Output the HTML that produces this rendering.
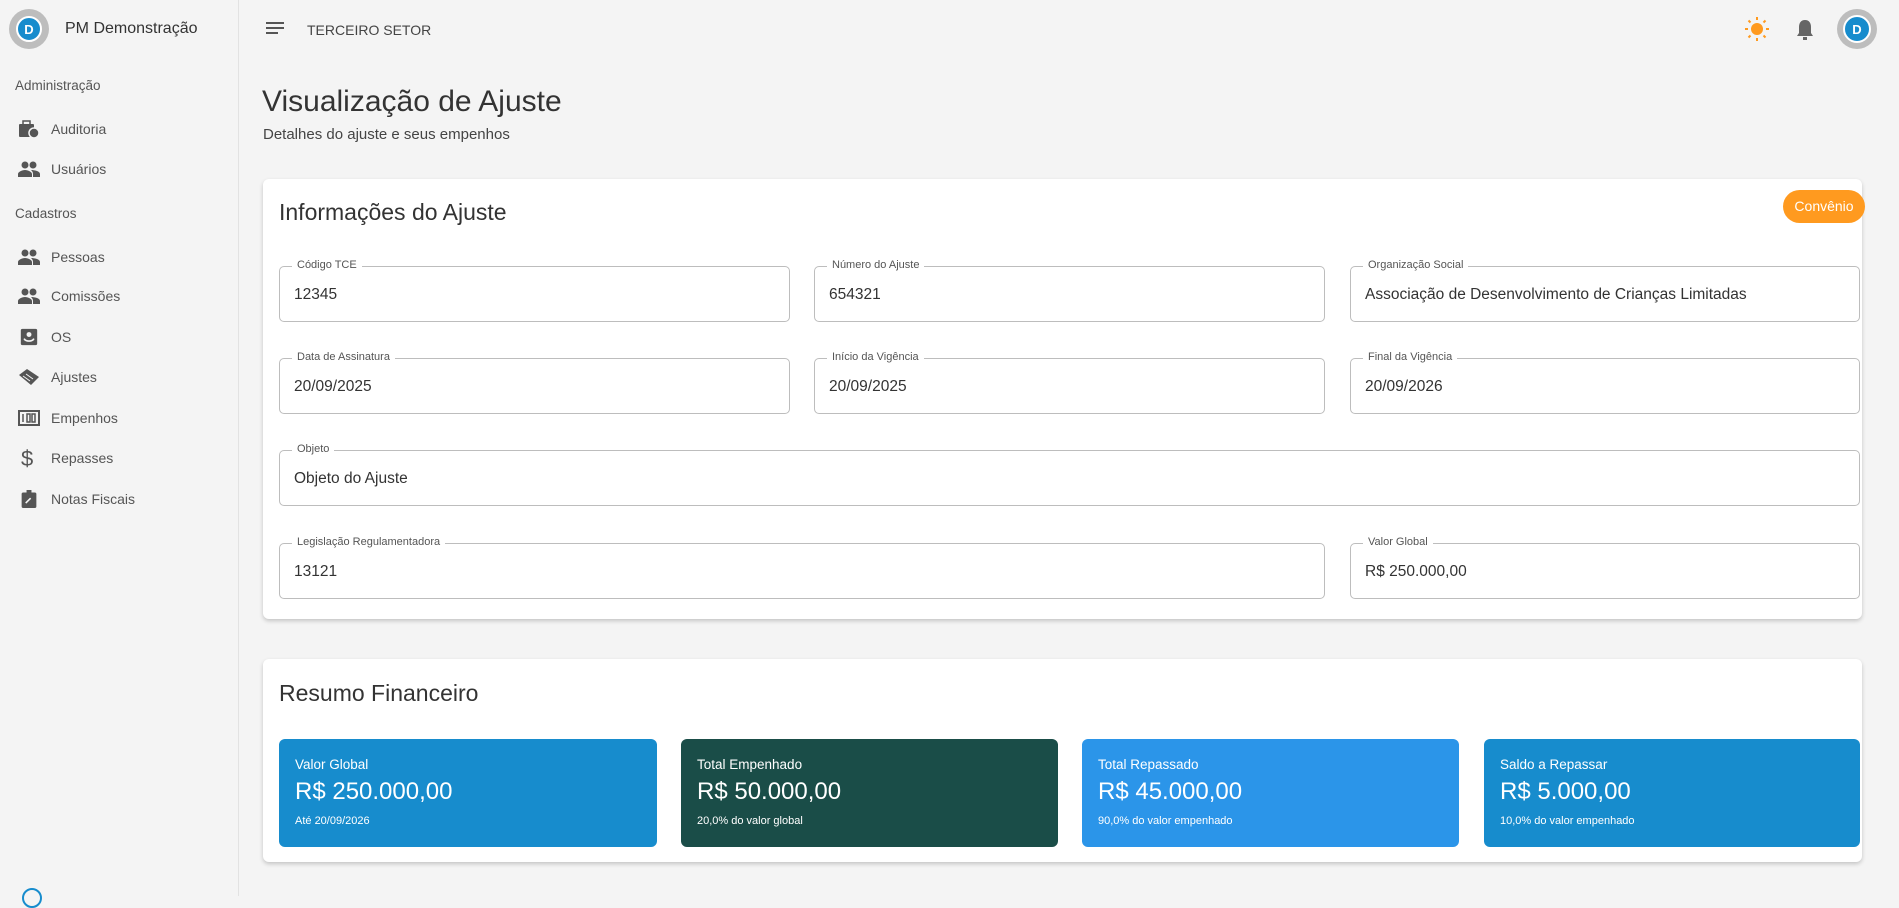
<!DOCTYPE html>
<html><head><meta charset="utf-8"><style>
*{box-sizing:border-box;margin:0;padding:0}
body{width:1899px;height:896px;overflow:hidden;background:#f4f4f4;font-family:"Liberation Sans",sans-serif;color:#333;position:relative}
.sb{position:absolute;left:0;top:0;width:239px;height:896px;background:#f4f4f4;border-right:1px solid #e2e2e2}
.abs{position:absolute}
.logo{position:absolute;border-radius:50%;background:#bdbdbd;display:flex;align-items:center;justify-content:center}
.logo i{display:flex;align-items:center;justify-content:center;border-radius:50%;background:#178ccd;border:2px solid #fff;color:#fff;font-style:normal;font-weight:bold;font-size:13px}
.sec{position:absolute;left:15px;font-size:13.5px;color:#555}
.it{position:absolute;left:51px;font-size:14px;color:#555;transform:translateY(-50%)}
.ic{position:absolute;left:18px;width:22px;height:18px;transform:translateY(-50%)}
.card{position:absolute;left:263px;width:1599px;background:#fff;border-radius:6px;box-shadow:0 2px 4px rgba(0,0,0,.2)}
.f{position:absolute;height:56px;border:1px solid #bdbdbd;border-radius:5px}
.f label{position:absolute;top:-8px;left:12px;background:#fff;padding:0 5px;font-size:11px;color:#555}
.f span{position:absolute;left:14px;top:19px;font-size:15.5px;color:#333}
.t{position:absolute;top:739px;height:108px;border-radius:6px;color:#fff;padding:18px 16px}
.t .a{font-size:13.5px}.t .b{font-size:24px;margin-top:6px}.t .c{font-size:11px;margin-top:9px}
</style></head><body>
<div class="sb">
<div class="logo" style="left:9px;top:9px;width:40px;height:40px"><i style="width:26px;height:26px">D</i></div>
<div class="abs" style="left:65px;top:20px;font-size:16px;color:#333">PM Demonstração</div>
<div class="sec" style="top:78px">Administração</div>
<svg class="ic" style="top:129px" viewBox="0 0 22 18"><rect x="1" y="4" width="15" height="13" rx="1" fill="#555"/><rect x="5" y="1" width="7" height="4" fill="none" stroke="#555" stroke-width="1.5"/><circle cx="16" cy="13" r="5" fill="#555" stroke="#f4f4f4" stroke-width="1.5"/></svg><div class="it" style="top:129px">Auditoria</div>
<svg class="ic" style="top:169px" viewBox="0 0 22 18"><circle cx="7" cy="5" r="3.5" fill="#555"/><circle cx="15" cy="5" r="3.5" fill="#555"/><path d="M0 17v-3c0-2 4-4 7-4s7 2 7 4v3zM13 10c3 0 9 1 9 4v3h-7v-3c0-2-1-3-2-4z" fill="#555"/></svg><div class="it" style="top:169px">Usuários</div>
<div class="sec" style="top:206px">Cadastros</div>
<svg class="ic" style="top:257px" viewBox="0 0 22 18"><circle cx="7" cy="5" r="3.5" fill="#555"/><circle cx="15" cy="5" r="3.5" fill="#555"/><path d="M0 17v-3c0-2 4-4 7-4s7 2 7 4v3zM13 10c3 0 9 1 9 4v3h-7v-3c0-2-1-3-2-4z" fill="#555"/></svg><div class="it" style="top:257px">Pessoas</div>
<svg class="ic" style="top:296px" viewBox="0 0 22 18"><circle cx="7" cy="5" r="3.5" fill="#555"/><circle cx="15" cy="5" r="3.5" fill="#555"/><path d="M0 17v-3c0-2 4-4 7-4s7 2 7 4v3zM13 10c3 0 9 1 9 4v3h-7v-3c0-2-1-3-2-4z" fill="#555"/></svg><div class="it" style="top:296px">Comissões</div>
<svg class="ic" style="top:337px" viewBox="0 0 22 22"><rect x="1" y="1" width="20" height="20" rx="2" fill="#555"/><circle cx="11" cy="8" r="3" fill="#f4f4f4"/><path d="M5 13c2 4 10 4 12 0" stroke="#f4f4f4" stroke-width="2" fill="none"/></svg><div class="it" style="top:337px">OS</div>
<svg class="ic" style="top:377px" viewBox="0 0 22 18"><path d="M1 7l8-6 12 8-8 8z" fill="#555"/><path d="M5 8l7 5M8 6l7 5" stroke="#f4f4f4"/></svg><div class="it" style="top:377px">Ajustes</div>
<svg class="ic" style="top:418px" viewBox="0 0 22 18"><rect x="1" y="2" width="20" height="14" fill="none" stroke="#555" stroke-width="2"/><path d="M5 5v8M9 5h3v8H9zM14 5h3v8h-3z" stroke="#555" stroke-width="1.5" fill="none"/></svg><div class="it" style="top:418px">Empenhos</div>
<div class="abs" style="left:21px;top:446px;font-size:22px;color:#555">$</div><div class="it" style="top:458px">Repasses</div>
<svg class="ic" style="top:499px" viewBox="0 0 22 22"><rect x="2" y="3" width="18" height="19" rx="2" fill="#555"/><rect x="8" y="0" width="6" height="4" fill="#555"/><path d="M7 16l6-6" stroke="#f4f4f4" stroke-width="2"/></svg><div class="it" style="top:499px">Notas Fiscais</div>
<div class="abs" style="left:22px;top:888px;width:20px;height:20px;border:2px solid #178ccd;border-radius:50%"></div>
</div>
<svg class="abs" style="left:266px;top:21px" width="18" height="14" viewBox="0 0 18 14"><path d="M0 2h18M0 7h18M0 12h12" stroke="#555" stroke-width="2"/></svg>
<div class="abs" style="left:307px;top:22px;font-size:14px;color:#444">TERCEIRO SETOR</div>
<svg class="abs" style="left:1745px;top:17px" width="24" height="24" viewBox="0 0 24 24"><circle cx="12" cy="12" r="6" fill="#ff9a1f"/><g stroke="#ff9a1f" stroke-width="2"><path d="M12 0v3M12 21v3M0 12h3M21 12h3M3.5 3.5l2 2M18.5 18.5l2 2M3.5 20.5l2-2M18.5 5.5l2-2"/></g></svg>
<svg class="abs" style="left:1796px;top:19px" width="18" height="22" viewBox="0 0 18 22"><path d="M9 1c4 0 6 3 6 7v6l2 3H1l2-3V8c0-4 2-7 6-7z" fill="#666"/><rect x="7" y="18" width="4" height="3" fill="#666"/></svg>
<div class="logo" style="left:1837px;top:9px;width:40px;height:40px"><i style="width:28px;height:28px">D</i></div>
<div class="abs" style="left:262px;top:85px;font-size:30px;color:#333">Visualização de Ajuste</div>
<div class="abs" style="left:263px;top:126px;font-size:15px;color:#444">Detalhes do ajuste e seus empenhos</div>
<div class="card" style="top:179px;height:440px">
<div class="abs" style="left:16px;top:20px;font-size:23px;color:#333">Informações do Ajuste</div>
<div class="abs" style="left:1520px;top:11px;width:82px;height:33px;border-radius:17px;background:#ff9a1f;color:#fff;font-size:14px;text-align:center;line-height:33px">Convênio</div>
<div class="f" style="left:16px;top:87px;width:511px"><label>Código TCE</label><span>12345</span></div>
<div class="f" style="left:551px;top:87px;width:511px"><label>Número do Ajuste</label><span>654321</span></div>
<div class="f" style="left:1087px;top:87px;width:510px"><label>Organização Social</label><span>Associação de Desenvolvimento de Crianças Limitadas</span></div>
<div class="f" style="left:16px;top:179px;width:511px"><label>Data de Assinatura</label><span>20/09/2025</span></div>
<div class="f" style="left:551px;top:179px;width:511px"><label>Início da Vigência</label><span>20/09/2025</span></div>
<div class="f" style="left:1087px;top:179px;width:510px"><label>Final da Vigência</label><span>20/09/2026</span></div>
<div class="f" style="left:16px;top:271px;width:1581px"><label>Objeto</label><span>Objeto do Ajuste</span></div>
<div class="f" style="left:16px;top:364px;width:1046px"><label>Legislação Regulamentadora</label><span>13121</span></div>
<div class="f" style="left:1087px;top:364px;width:510px"><label>Valor Global</label><span>R$ 250.000,00</span></div>
</div>
<div class="card" style="top:659px;height:203px">
<div class="abs" style="left:16px;top:21px;font-size:23px;color:#333">Resumo Financeiro</div>
</div>
<div class="t" style="left:279px;width:378px;background:#178ccd"><div class="a">Valor Global</div><div class="b">R$ 250.000,00</div><div class="c">Até 20/09/2026</div></div>
<div class="t" style="left:681px;width:377px;background:#1a4d48"><div class="a">Total Empenhado</div><div class="b">R$ 50.000,00</div><div class="c">20,0% do valor global</div></div>
<div class="t" style="left:1082px;width:377px;background:#2b95e9"><div class="a">Total Repassado</div><div class="b">R$ 45.000,00</div><div class="c">90,0% do valor empenhado</div></div>
<div class="t" style="left:1484px;width:376px;background:#178ccd"><div class="a">Saldo a Repassar</div><div class="b">R$ 5.000,00</div><div class="c">10,0% do valor empenhado</div></div>
</body></html>
